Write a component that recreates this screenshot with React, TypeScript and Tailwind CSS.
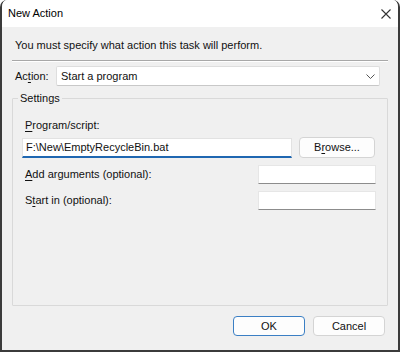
import React from "react";

function U({ children }: { children: React.ReactNode }) {
  return <span className="underline underline-offset-[2px]">{children}</span>;
}

export default function App() {
  return (
    <div
      className="w-[400px] h-[352px] flex flex-col bg-[#f0f0f0] border-l-2 border-r-2 border-b-2 border-[#3b3b3b] rounded-t-[7px] overflow-hidden text-[11px] text-[#111]"
      style={{ fontFamily: '"Segoe UI", "Liberation Sans", Arial, sans-serif' }}
    >
      {/* title bar */}
      <div className="h-[27px] bg-white flex items-center justify-between pl-[6px] pr-[7px] shrink-0">
        <span className="text-[11px] text-black">New Action</span>
        <svg width="10" height="10" viewBox="0 0 10 10">
          <path d="M0.5 0.5 L9.5 9.5 M9.5 0.5 L0.5 9.5" stroke="#333" strokeWidth="1.1" fill="none" />
        </svg>
      </div>

      <div className="flex flex-col px-[10px] pt-[10px]">
        <div className="pl-[3px] leading-[16px]">You must specify what action this task will perform.</div>
        <div className="mt-[7px] h-px bg-[#a8a8a8] border-b border-white box-content" />

        <div className="flex items-center mt-[4px] h-[20px]">
          <span className="w-[44px] pl-[3px]">
            Ac<U>t</U>ion:
          </span>
          <div className="w-[324px] h-[20px] bg-white border border-[#dedede] border-b-[#c8c8c8] rounded-[2px] flex items-center justify-between pl-[4px] pr-[4px]">
            <span>Start a program</span>
            <svg width="9" height="5" viewBox="0 0 9 5">
              <path d="M0.5 0.5 L4.5 4.5 L8.5 0.5" stroke="#555" strokeWidth="1" fill="none" />
            </svg>
          </div>
        </div>

        <fieldset className="mt-[5px] h-[215px] border border-[#d9d9d9] rounded-[1px] pl-[9px] pr-[11px] pt-0">
          <legend className="px-[2px] ml-[-4px] leading-[14px]">Settings</legend>

          <div className="mt-[12px] leading-[16px] pl-[3px]">
            <U>P</U>rogram/script:
          </div>
          <div className="flex items-center gap-[7px] mt-[4px]">
            <div className="w-[270px] h-[20px] bg-white border border-[#e2e2e2] border-b-2 border-b-[#1f67b1] flex items-center pl-[3px]">
              F:\New\EmptyRecycleBin.bat
            </div>
            <div className="w-[76px] h-[21px] bg-[#fdfdfd] border border-[#d4d4d4] rounded-[4px] flex items-center justify-center">
              B<U>r</U>owse...
            </div>
          </div>

          <div className="flex items-center justify-between mt-[7px] h-[19px]">
            <span className="pl-[3px]">
              <U>A</U>dd arguments (optional):
            </span>
            <div className="w-[118px] h-[19px] bg-white border border-[#e6e6e6] border-b-[#8c8c8c]" />
          </div>
          <div className="flex items-center justify-between mt-[7px] h-[19px]">
            <span className="pl-[3px]">
              S<U>t</U>art in (optional):
            </span>
            <div className="w-[118px] h-[19px] bg-white border border-[#e6e6e6] border-b-[#8c8c8c]" />
          </div>
        </fieldset>

        <div className="flex justify-end gap-[8px] mt-[10px] pr-[3px]">
          <div className="w-[72px] h-[20px] bg-[#fdfdfd] border border-[#3b7fc4] rounded-[4px] flex items-center justify-center">
            OK
          </div>
          <div className="w-[72px] h-[20px] bg-[#fdfdfd] border border-[#d4d4d4] rounded-[4px] flex items-center justify-center">
            Cancel
          </div>
        </div>
      </div>
    </div>
  );
}
